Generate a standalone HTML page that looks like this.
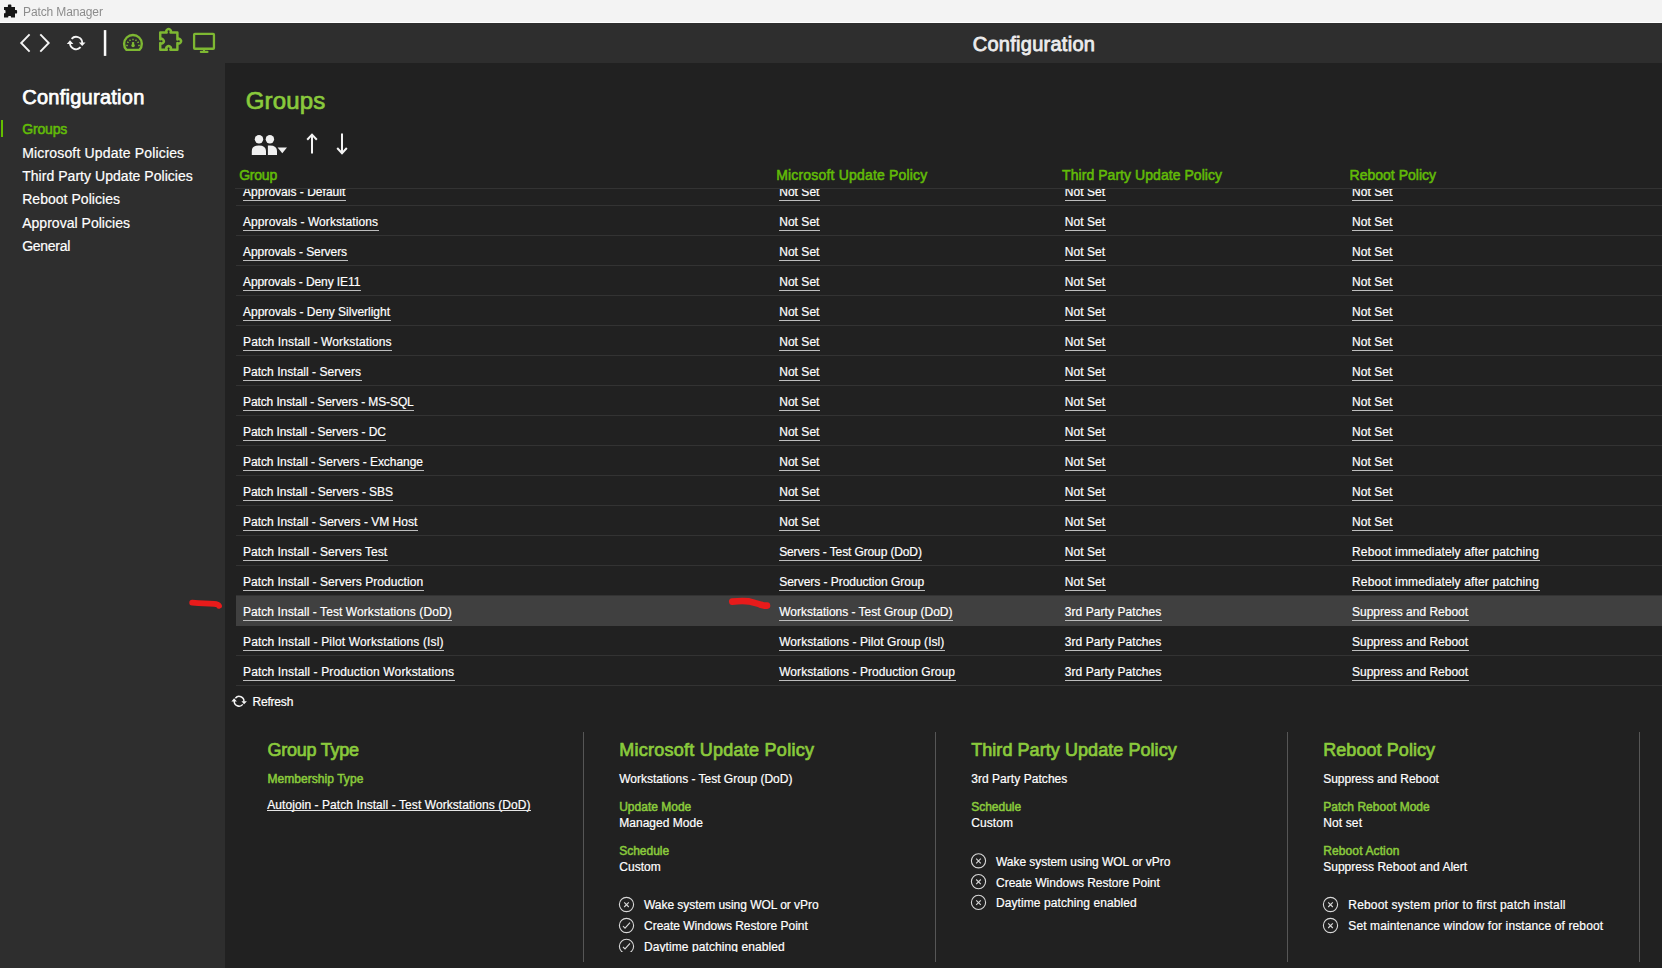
<!DOCTYPE html>
<html lang="en">
<head>
<meta charset="utf-8">
<title>Patch Manager</title>
<style>
html,body{margin:0;padding:0;}
body{width:1662px;height:968px;overflow:hidden;background:#212121;position:relative;font-family:"Liberation Sans",sans-serif;}
.abs{position:absolute;}
#titlebar{left:0;top:0;width:1662px;height:22px;background:#f3f3f3;}
#titleline{left:0;top:22px;width:1662px;height:1px;background:#ffffff;}
#hdr{left:0;top:23px;width:1662px;height:40px;background:#2e2e2e;}
#side{left:0;top:63px;width:225px;height:905px;background:#2e2e2e;}
#main{left:225px;top:63px;width:1437px;height:905px;background:#212121;}
.t{position:absolute;white-space:pre;line-height:1;display:block;}
.ul::after{content:"";position:absolute;left:0;right:-0.6px;top:14px;height:1px;background:#bdbdbd;}
.ul2::after{content:"";position:absolute;left:0;right:0;top:11px;height:1px;background:#e6e6e6;}
.clip{position:absolute;left:0;overflow:hidden;width:1662px;}
.clip>.in{position:absolute;left:0;width:1662px;}
.sep{position:absolute;left:236px;width:1426px;height:1px;background:#333333;}
.vd{position:absolute;top:732px;width:1px;height:230px;background:#565656;}
svg{position:absolute;overflow:visible;}
</style>
</head>
<body>
<div id="titlebar" class="abs"></div>
<div id="titleline" class="abs"></div>
<div id="hdr" class="abs"></div>
<div id="side" class="abs"></div>
<div id="main" class="abs"></div>
<div class="abs" style="left:1px;top:120px;width:2px;height:17px;background:#64be00"></div>

<!-- table -->
<div class="abs" style="left:235px;top:188px;width:1427px;height:1px;background:#333"></div>
<div class="clip" style="top:189px;height:497px;"><div class="in" style="top:-189px;height:968px;">
<div class="abs" style="left:236px;top:596px;width:1426px;height:29.5px;background:#404040"></div>
<div class="sep" style="top:205px"></div>
<div class="sep" style="top:235px"></div>
<div class="sep" style="top:265px"></div>
<div class="sep" style="top:295px"></div>
<div class="sep" style="top:325px"></div>
<div class="sep" style="top:355px"></div>
<div class="sep" style="top:385px"></div>
<div class="sep" style="top:415px"></div>
<div class="sep" style="top:445px"></div>
<div class="sep" style="top:475px"></div>
<div class="sep" style="top:505px"></div>
<div class="sep" style="top:535px"></div>
<div class="sep" style="top:565px"></div>
<div class="sep" style="top:595px"></div>
<div class="sep" style="top:655px"></div>
<div class="sep" style="top:685px"></div>

<span class="t ul" style="left:243.0px;top:186px;font-size:12px;color:#ffffff;letter-spacing:0.013px;-webkit-text-stroke:0.2px #ffffff;">Approvals - Default</span>
<span class="t ul" style="left:779.2px;top:186px;font-size:12px;color:#ffffff;letter-spacing:0.038px;-webkit-text-stroke:0.2px #ffffff;">Not Set</span>
<span class="t ul" style="left:1064.8px;top:186px;font-size:12px;color:#ffffff;letter-spacing:0.038px;-webkit-text-stroke:0.2px #ffffff;">Not Set</span>
<span class="t ul" style="left:1352.0px;top:186px;font-size:12px;color:#ffffff;letter-spacing:0.038px;-webkit-text-stroke:0.2px #ffffff;">Not Set</span>
<span class="t ul" style="left:243.0px;top:216px;font-size:12px;color:#ffffff;letter-spacing:0.076px;-webkit-text-stroke:0.2px #ffffff;">Approvals - Workstations</span>
<span class="t ul" style="left:779.2px;top:216px;font-size:12px;color:#ffffff;letter-spacing:0.038px;-webkit-text-stroke:0.2px #ffffff;">Not Set</span>
<span class="t ul" style="left:1064.8px;top:216px;font-size:12px;color:#ffffff;letter-spacing:0.038px;-webkit-text-stroke:0.2px #ffffff;">Not Set</span>
<span class="t ul" style="left:1352.0px;top:216px;font-size:12px;color:#ffffff;letter-spacing:0.038px;-webkit-text-stroke:0.2px #ffffff;">Not Set</span>
<span class="t ul" style="left:243.0px;top:246px;font-size:12px;color:#ffffff;letter-spacing:-0.072px;-webkit-text-stroke:0.2px #ffffff;">Approvals - Servers</span>
<span class="t ul" style="left:779.2px;top:246px;font-size:12px;color:#ffffff;letter-spacing:0.038px;-webkit-text-stroke:0.2px #ffffff;">Not Set</span>
<span class="t ul" style="left:1064.8px;top:246px;font-size:12px;color:#ffffff;letter-spacing:0.038px;-webkit-text-stroke:0.2px #ffffff;">Not Set</span>
<span class="t ul" style="left:1352.0px;top:246px;font-size:12px;color:#ffffff;letter-spacing:0.038px;-webkit-text-stroke:0.2px #ffffff;">Not Set</span>
<span class="t ul" style="left:243.0px;top:276px;font-size:12px;color:#ffffff;letter-spacing:-0.089px;-webkit-text-stroke:0.2px #ffffff;">Approvals - Deny IE11</span>
<span class="t ul" style="left:779.2px;top:276px;font-size:12px;color:#ffffff;letter-spacing:0.038px;-webkit-text-stroke:0.2px #ffffff;">Not Set</span>
<span class="t ul" style="left:1064.8px;top:276px;font-size:12px;color:#ffffff;letter-spacing:0.038px;-webkit-text-stroke:0.2px #ffffff;">Not Set</span>
<span class="t ul" style="left:1352.0px;top:276px;font-size:12px;color:#ffffff;letter-spacing:0.038px;-webkit-text-stroke:0.2px #ffffff;">Not Set</span>
<span class="t ul" style="left:243.0px;top:306px;font-size:12px;color:#ffffff;letter-spacing:-0.015px;-webkit-text-stroke:0.2px #ffffff;">Approvals - Deny Silverlight</span>
<span class="t ul" style="left:779.2px;top:306px;font-size:12px;color:#ffffff;letter-spacing:0.038px;-webkit-text-stroke:0.2px #ffffff;">Not Set</span>
<span class="t ul" style="left:1064.8px;top:306px;font-size:12px;color:#ffffff;letter-spacing:0.038px;-webkit-text-stroke:0.2px #ffffff;">Not Set</span>
<span class="t ul" style="left:1352.0px;top:306px;font-size:12px;color:#ffffff;letter-spacing:0.038px;-webkit-text-stroke:0.2px #ffffff;">Not Set</span>
<span class="t ul" style="left:243.0px;top:336px;font-size:12px;color:#ffffff;letter-spacing:0.126px;-webkit-text-stroke:0.2px #ffffff;">Patch Install - Workstations</span>
<span class="t ul" style="left:779.2px;top:336px;font-size:12px;color:#ffffff;letter-spacing:0.038px;-webkit-text-stroke:0.2px #ffffff;">Not Set</span>
<span class="t ul" style="left:1064.8px;top:336px;font-size:12px;color:#ffffff;letter-spacing:0.038px;-webkit-text-stroke:0.2px #ffffff;">Not Set</span>
<span class="t ul" style="left:1352.0px;top:336px;font-size:12px;color:#ffffff;letter-spacing:0.038px;-webkit-text-stroke:0.2px #ffffff;">Not Set</span>
<span class="t ul" style="left:243.0px;top:366px;font-size:12px;color:#ffffff;letter-spacing:0.027px;-webkit-text-stroke:0.2px #ffffff;">Patch Install - Servers</span>
<span class="t ul" style="left:779.2px;top:366px;font-size:12px;color:#ffffff;letter-spacing:0.038px;-webkit-text-stroke:0.2px #ffffff;">Not Set</span>
<span class="t ul" style="left:1064.8px;top:366px;font-size:12px;color:#ffffff;letter-spacing:0.038px;-webkit-text-stroke:0.2px #ffffff;">Not Set</span>
<span class="t ul" style="left:1352.0px;top:366px;font-size:12px;color:#ffffff;letter-spacing:0.038px;-webkit-text-stroke:0.2px #ffffff;">Not Set</span>
<span class="t ul" style="left:243.0px;top:396px;font-size:12px;color:#ffffff;letter-spacing:-0.105px;-webkit-text-stroke:0.2px #ffffff;">Patch Install - Servers - MS-SQL</span>
<span class="t ul" style="left:779.2px;top:396px;font-size:12px;color:#ffffff;letter-spacing:0.038px;-webkit-text-stroke:0.2px #ffffff;">Not Set</span>
<span class="t ul" style="left:1064.8px;top:396px;font-size:12px;color:#ffffff;letter-spacing:0.038px;-webkit-text-stroke:0.2px #ffffff;">Not Set</span>
<span class="t ul" style="left:1352.0px;top:396px;font-size:12px;color:#ffffff;letter-spacing:0.038px;-webkit-text-stroke:0.2px #ffffff;">Not Set</span>
<span class="t ul" style="left:243.0px;top:426px;font-size:12px;color:#ffffff;letter-spacing:-0.092px;-webkit-text-stroke:0.2px #ffffff;">Patch Install - Servers - DC</span>
<span class="t ul" style="left:779.2px;top:426px;font-size:12px;color:#ffffff;letter-spacing:0.038px;-webkit-text-stroke:0.2px #ffffff;">Not Set</span>
<span class="t ul" style="left:1064.8px;top:426px;font-size:12px;color:#ffffff;letter-spacing:0.038px;-webkit-text-stroke:0.2px #ffffff;">Not Set</span>
<span class="t ul" style="left:1352.0px;top:426px;font-size:12px;color:#ffffff;letter-spacing:0.038px;-webkit-text-stroke:0.2px #ffffff;">Not Set</span>
<span class="t ul" style="left:243.0px;top:456px;font-size:12px;color:#ffffff;letter-spacing:-0.042px;-webkit-text-stroke:0.2px #ffffff;">Patch Install - Servers - Exchange</span>
<span class="t ul" style="left:779.2px;top:456px;font-size:12px;color:#ffffff;letter-spacing:0.038px;-webkit-text-stroke:0.2px #ffffff;">Not Set</span>
<span class="t ul" style="left:1064.8px;top:456px;font-size:12px;color:#ffffff;letter-spacing:0.038px;-webkit-text-stroke:0.2px #ffffff;">Not Set</span>
<span class="t ul" style="left:1352.0px;top:456px;font-size:12px;color:#ffffff;letter-spacing:0.038px;-webkit-text-stroke:0.2px #ffffff;">Not Set</span>
<span class="t ul" style="left:243.0px;top:486px;font-size:12px;color:#ffffff;letter-spacing:-0.075px;-webkit-text-stroke:0.2px #ffffff;">Patch Install - Servers - SBS</span>
<span class="t ul" style="left:779.2px;top:486px;font-size:12px;color:#ffffff;letter-spacing:0.038px;-webkit-text-stroke:0.2px #ffffff;">Not Set</span>
<span class="t ul" style="left:1064.8px;top:486px;font-size:12px;color:#ffffff;letter-spacing:0.038px;-webkit-text-stroke:0.2px #ffffff;">Not Set</span>
<span class="t ul" style="left:1352.0px;top:486px;font-size:12px;color:#ffffff;letter-spacing:0.038px;-webkit-text-stroke:0.2px #ffffff;">Not Set</span>
<span class="t ul" style="left:243.0px;top:516px;font-size:12px;color:#ffffff;letter-spacing:0.008px;-webkit-text-stroke:0.2px #ffffff;">Patch Install - Servers - VM Host</span>
<span class="t ul" style="left:779.2px;top:516px;font-size:12px;color:#ffffff;letter-spacing:0.038px;-webkit-text-stroke:0.2px #ffffff;">Not Set</span>
<span class="t ul" style="left:1064.8px;top:516px;font-size:12px;color:#ffffff;letter-spacing:0.038px;-webkit-text-stroke:0.2px #ffffff;">Not Set</span>
<span class="t ul" style="left:1352.0px;top:516px;font-size:12px;color:#ffffff;letter-spacing:0.038px;-webkit-text-stroke:0.2px #ffffff;">Not Set</span>
<span class="t ul" style="left:243.0px;top:546px;font-size:12px;color:#ffffff;letter-spacing:0.061px;-webkit-text-stroke:0.2px #ffffff;">Patch Install - Servers Test</span>
<span class="t ul" style="left:779.2px;top:546px;font-size:12px;color:#ffffff;letter-spacing:-0.124px;-webkit-text-stroke:0.2px #ffffff;">Servers - Test Group (DoD)</span>
<span class="t ul" style="left:1064.8px;top:546px;font-size:12px;color:#ffffff;letter-spacing:0.038px;-webkit-text-stroke:0.2px #ffffff;">Not Set</span>
<span class="t ul" style="left:1352.0px;top:546px;font-size:12px;color:#ffffff;letter-spacing:0.148px;-webkit-text-stroke:0.2px #ffffff;">Reboot immediately after patching</span>
<span class="t ul" style="left:243.0px;top:576px;font-size:12px;color:#ffffff;letter-spacing:0.062px;-webkit-text-stroke:0.2px #ffffff;">Patch Install - Servers Production</span>
<span class="t ul" style="left:779.2px;top:576px;font-size:12px;color:#ffffff;letter-spacing:-0.041px;-webkit-text-stroke:0.2px #ffffff;">Servers - Production Group</span>
<span class="t ul" style="left:1064.8px;top:576px;font-size:12px;color:#ffffff;letter-spacing:0.038px;-webkit-text-stroke:0.2px #ffffff;">Not Set</span>
<span class="t ul" style="left:1352.0px;top:576px;font-size:12px;color:#ffffff;letter-spacing:0.148px;-webkit-text-stroke:0.2px #ffffff;">Reboot immediately after patching</span>
<span class="t ul" style="left:243.0px;top:606px;font-size:12px;color:#ffffff;letter-spacing:0.079px;-webkit-text-stroke:0.2px #ffffff;">Patch Install - Test Workstations (DoD)</span>
<span class="t ul" style="left:779.2px;top:606px;font-size:12px;color:#ffffff;letter-spacing:-0.010px;-webkit-text-stroke:0.2px #ffffff;">Workstations - Test Group (DoD)</span>
<span class="t ul" style="left:1064.8px;top:606px;font-size:12px;color:#ffffff;letter-spacing:0.065px;-webkit-text-stroke:0.2px #ffffff;">3rd Party Patches</span>
<span class="t ul" style="left:1352.0px;top:606px;font-size:12px;color:#ffffff;-webkit-text-stroke:0.2px #ffffff;">Suppress and Reboot</span>
<span class="t ul" style="left:243.0px;top:636px;font-size:12px;color:#ffffff;letter-spacing:0.136px;-webkit-text-stroke:0.2px #ffffff;">Patch Install - Pilot Workstations (Isl)</span>
<span class="t ul" style="left:779.2px;top:636px;font-size:12px;color:#ffffff;letter-spacing:0.064px;-webkit-text-stroke:0.2px #ffffff;">Workstations - Pilot Group (Isl)</span>
<span class="t ul" style="left:1064.8px;top:636px;font-size:12px;color:#ffffff;letter-spacing:0.065px;-webkit-text-stroke:0.2px #ffffff;">3rd Party Patches</span>
<span class="t ul" style="left:1352.0px;top:636px;font-size:12px;color:#ffffff;-webkit-text-stroke:0.2px #ffffff;">Suppress and Reboot</span>
<span class="t ul" style="left:243.0px;top:666px;font-size:12px;color:#ffffff;letter-spacing:0.134px;-webkit-text-stroke:0.2px #ffffff;">Patch Install - Production Workstations</span>
<span class="t ul" style="left:779.2px;top:666px;font-size:12px;color:#ffffff;letter-spacing:0.063px;-webkit-text-stroke:0.2px #ffffff;">Workstations - Production Group</span>
<span class="t ul" style="left:1064.8px;top:666px;font-size:12px;color:#ffffff;letter-spacing:0.065px;-webkit-text-stroke:0.2px #ffffff;">3rd Party Patches</span>
<span class="t ul" style="left:1352.0px;top:666px;font-size:12px;color:#ffffff;-webkit-text-stroke:0.2px #ffffff;">Suppress and Reboot</span>
</div></div>

<!-- bottom panels -->
<div class="vd" style="left:583px"></div>
<div class="vd" style="left:935px"></div>
<div class="vd" style="left:1287px"></div>
<div class="vd" style="left:1639px"></div>
<div class="clip" style="top:725px;height:227px;"><div class="in" style="top:-725px;height:968px;">
<span class="t" style="left:267.4px;top:741px;font-size:18px;color:#8aca3c;letter-spacing:-0.223px;-webkit-text-stroke:0.7px #8aca3c;">Group Type</span>
<span class="t" style="left:619.2px;top:741px;font-size:18px;color:#8aca3c;letter-spacing:0.257px;-webkit-text-stroke:0.7px #8aca3c;">Microsoft Update Policy</span>
<span class="t" style="left:971.2px;top:741px;font-size:18px;color:#8aca3c;letter-spacing:0.060px;-webkit-text-stroke:0.7px #8aca3c;">Third Party Update Policy</span>
<span class="t" style="left:1323.2px;top:741px;font-size:18px;color:#8aca3c;letter-spacing:0.072px;-webkit-text-stroke:0.7px #8aca3c;">Reboot Policy</span>
<span class="t" style="left:267.4px;top:773px;font-size:12px;color:#8aca3c;letter-spacing:0.056px;-webkit-text-stroke:0.5px #8aca3c;">Membership Type</span>
<span class="t ul2" style="left:267.2px;top:799px;font-size:12px;color:#ffffff;letter-spacing:0.073px;-webkit-text-stroke:0.2px #ffffff;">Autojoin - Patch Install - Test Workstations (DoD)</span>
<span class="t" style="left:619.2px;top:773px;font-size:12px;color:#ffffff;letter-spacing:-0.013px;-webkit-text-stroke:0.2px #ffffff;">Workstations - Test Group (DoD)</span>
<span class="t" style="left:619.2px;top:801px;font-size:12px;color:#8aca3c;-webkit-text-stroke:0.5px #8aca3c;">Update Mode</span>
<span class="t" style="left:619.2px;top:817px;font-size:12px;color:#ffffff;letter-spacing:0.034px;-webkit-text-stroke:0.2px #ffffff;">Managed Mode</span>
<span class="t" style="left:619.2px;top:845px;font-size:12px;color:#8aca3c;letter-spacing:-0.006px;-webkit-text-stroke:0.5px #8aca3c;">Schedule</span>
<span class="t" style="left:619.2px;top:861px;font-size:12px;color:#ffffff;letter-spacing:0.059px;-webkit-text-stroke:0.2px #ffffff;">Custom</span>
<span class="t" style="left:644.0px;top:899px;font-size:12px;color:#ffffff;letter-spacing:-0.042px;-webkit-text-stroke:0.2px #ffffff;">Wake system using WOL or vPro</span>
<span class="t" style="left:644.0px;top:920px;font-size:12px;color:#ffffff;letter-spacing:-0.010px;-webkit-text-stroke:0.2px #ffffff;">Create Windows Restore Point</span>
<span class="t" style="left:644.0px;top:941px;font-size:12px;color:#ffffff;letter-spacing:0.081px;-webkit-text-stroke:0.2px #ffffff;">Daytime patching enabled</span>
<span class="t" style="left:971.2px;top:773px;font-size:12px;color:#ffffff;letter-spacing:0.048px;-webkit-text-stroke:0.2px #ffffff;">3rd Party Patches</span>
<span class="t" style="left:971.2px;top:801px;font-size:12px;color:#8aca3c;letter-spacing:-0.006px;-webkit-text-stroke:0.5px #8aca3c;">Schedule</span>
<span class="t" style="left:971.2px;top:817px;font-size:12px;color:#ffffff;letter-spacing:0.093px;-webkit-text-stroke:0.2px #ffffff;">Custom</span>
<span class="t" style="left:996.0px;top:856px;font-size:12px;color:#ffffff;letter-spacing:-0.053px;-webkit-text-stroke:0.2px #ffffff;">Wake system using WOL or vPro</span>
<span class="t" style="left:996.0px;top:877px;font-size:12px;color:#ffffff;letter-spacing:-0.010px;-webkit-text-stroke:0.2px #ffffff;">Create Windows Restore Point</span>
<span class="t" style="left:996.0px;top:897px;font-size:12px;color:#ffffff;letter-spacing:0.081px;-webkit-text-stroke:0.2px #ffffff;">Daytime patching enabled</span>
<span class="t" style="left:1323.2px;top:773px;font-size:12px;color:#ffffff;letter-spacing:-0.021px;-webkit-text-stroke:0.2px #ffffff;">Suppress and Reboot</span>
<span class="t" style="left:1323.2px;top:801px;font-size:12px;color:#8aca3c;letter-spacing:0.031px;-webkit-text-stroke:0.5px #8aca3c;">Patch Reboot Mode</span>
<span class="t" style="left:1323.2px;top:817px;font-size:12px;color:#ffffff;letter-spacing:0.126px;-webkit-text-stroke:0.2px #ffffff;">Not set</span>
<span class="t" style="left:1323.2px;top:845px;font-size:12px;color:#8aca3c;letter-spacing:0.122px;-webkit-text-stroke:0.5px #8aca3c;">Reboot Action</span>
<span class="t" style="left:1323.2px;top:861px;font-size:12px;color:#ffffff;letter-spacing:0.022px;-webkit-text-stroke:0.2px #ffffff;">Suppress Reboot and Alert</span>
<span class="t" style="left:1348.3px;top:899px;font-size:12px;color:#ffffff;letter-spacing:0.172px;-webkit-text-stroke:0.2px #ffffff;">Reboot system prior to first patch install</span>
<span class="t" style="left:1348.3px;top:920px;font-size:12px;color:#ffffff;letter-spacing:0.120px;-webkit-text-stroke:0.2px #ffffff;">Set maintenance window for instance of reboot</span>
<svg width="1662" height="968" viewBox="0 0 1662 968" style="left:0;top:0">
<g fill="none" stroke="#d8d8d8" stroke-width="1.1">
<circle cx="626.5" cy="904.5" r="7.1"/><path d="M624.2 902.4 L628.8 907.0 M628.8 902.4 L624.2 907.0"/>
<circle cx="626.5" cy="925.5" r="7.1"/><path d="M623.0 926.2 L625.0 928.1 L630.0 922.6"/>
<circle cx="626.5" cy="946.3" r="7.1"/><path d="M623.0 947.0 L625.0 948.9 L630.0 943.4"/>
<circle cx="978.5" cy="860.8" r="7.1"/><path d="M976.2 858.7 L980.8 863.3 M980.8 858.7 L976.2 863.3"/>
<circle cx="978.5" cy="881.6" r="7.1"/><path d="M976.2 879.5 L980.8 884.1 M980.8 879.5 L976.2 884.1"/>
<circle cx="978.5" cy="902.4" r="7.1"/><path d="M976.2 900.3 L980.8 904.9 M980.8 900.3 L976.2 904.9"/>
<circle cx="1330.5" cy="904.5" r="7.1"/><path d="M1328.2 902.4 L1332.8 907.0 M1332.8 902.4 L1328.2 907.0"/>
<circle cx="1330.5" cy="925.5" r="7.1"/><path d="M1328.2 923.4 L1332.8 928.0 M1332.8 923.4 L1328.2 928.0"/>
</g></svg>

</div></div>

<span class="t" style="left:22.6px;top:6px;font-size:12px;color:#8c8c8c;letter-spacing:-0.122px;will-change:transform;">Patch Manager</span>
<span class="t" style="left:972.7px;top:34px;font-size:20px;color:#ececec;letter-spacing:0.272px;-webkit-text-stroke:0.8px #ececec;">Configuration</span>
<span class="t" style="left:22.2px;top:87px;font-size:20px;color:#ffffff;letter-spacing:0.264px;-webkit-text-stroke:0.75px #ffffff;">Configuration</span>
<span class="t" style="left:22.2px;top:122px;font-size:14px;color:#62bb08;letter-spacing:-0.154px;-webkit-text-stroke:0.55px #62bb08;">Groups</span>
<span class="t" style="left:22.2px;top:146px;font-size:14px;color:#ffffff;letter-spacing:0.166px;-webkit-text-stroke:0.2px #ffffff;">Microsoft Update Policies</span>
<span class="t" style="left:22.2px;top:169px;font-size:14px;color:#ffffff;letter-spacing:0.039px;-webkit-text-stroke:0.2px #ffffff;">Third Party Update Policies</span>
<span class="t" style="left:22.2px;top:192px;font-size:14px;color:#ffffff;letter-spacing:0.035px;-webkit-text-stroke:0.2px #ffffff;">Reboot Policies</span>
<span class="t" style="left:22.2px;top:216px;font-size:14px;color:#ffffff;letter-spacing:0.024px;-webkit-text-stroke:0.2px #ffffff;">Approval Policies</span>
<span class="t" style="left:22.2px;top:239px;font-size:14px;color:#ffffff;letter-spacing:-0.288px;-webkit-text-stroke:0.2px #ffffff;">General</span>
<span class="t" style="left:245.8px;top:89px;font-size:24px;color:#8aca3c;letter-spacing:0.133px;-webkit-text-stroke:0.7px #8aca3c;">Groups</span>
<span class="t" style="left:239.2px;top:168px;font-size:14px;color:#62bb08;letter-spacing:-0.224px;-webkit-text-stroke:0.55px #62bb08;">Group</span>
<span class="t" style="left:776.2px;top:168px;font-size:14px;color:#62bb08;letter-spacing:0.184px;-webkit-text-stroke:0.55px #62bb08;">Microsoft Update Policy</span>
<span class="t" style="left:1062.1px;top:168px;font-size:14px;color:#62bb08;letter-spacing:0.051px;-webkit-text-stroke:0.55px #62bb08;">Third Party Update Policy</span>
<span class="t" style="left:1349.5px;top:168px;font-size:14px;color:#62bb08;letter-spacing:0.016px;-webkit-text-stroke:0.55px #62bb08;">Reboot Policy</span>
<span class="t" style="left:252.4px;top:696px;font-size:12px;color:#ffffff;letter-spacing:-0.176px;-webkit-text-stroke:0.2px #ffffff;">Refresh</span>
<svg width="1662" height="968" viewBox="0 0 1662 968" style="left:0;top:0;pointer-events:none">
<!-- title bar puzzle -->
<path fill="#161616" d="M4 6.9 H7.9 V5.4 Q7.9 4.5 8.8 4.5 H10.5 Q11.4 4.5 11.4 5.4 V6.9 H15 V10.1 H16.2 Q17.1 10.1 17.1 11 V12.7 Q17.1 13.6 16.2 13.6 H15 V17.5 H11 V16.7 Q11 16 10.3 16 H8.9 Q8.2 16 8.2 16.7 V17.4 H4 V13.3 H4.6 Q5.5 13.3 5.5 12.4 V10.8 Q5.5 9.9 4.6 9.9 H4 Z"/>
<!-- nav chevrons -->
<g fill="none" stroke="#f4f4f4" stroke-width="1.9" stroke-linejoin="miter">
<polyline points="29.6,34.4 21.2,43 29.6,51.6"/>
<polyline points="40.3,34.4 48.7,43 40.3,51.6"/>
</g>
<!-- refresh -->
<g fill="none" stroke="#f4f4f4" stroke-width="1.85">
<path d="M71.6 38.9 A6.05 6.05 0 0 1 82.2 43.1"/>
<path d="M80.6 47.2 A6.05 6.05 0 0 1 70 43.1"/>
</g>
<path fill="#f4f4f4" d="M78.9 42.4 H85.5 L82.2 46 Z M66.8 43.9 H73.4 L70 40.3 Z"/>
<!-- separator bar -->
<rect x="103.8" y="30.1" width="2.5" height="25.8" fill="#fafafa"/>
<!-- gauge -->
<path fill="none" stroke="#7eb832" stroke-width="2.4" stroke-linejoin="round" d="M126.5 49.9 A8.85 8.85 0 1 1 139.4 49.9 Z"/>
<path fill="none" stroke="#7eb832" stroke-width="1.3" d="M127.80 45.50 L126.20 45.50 M128.59 42.74 L127.23 41.90 M130.40 41.00 L129.60 39.61 M133.00 40.30 L133.00 38.70 M135.60 41.00 L136.40 39.61 M137.41 42.74 L138.77 41.90 M138.20 45.50 L139.80 45.50"/>
<g fill="#7eb832"><rect x="131.95" y="41.9" width="2.2" height="5.2" rx="0.6"/><circle cx="133.05" cy="45.5" r="1.7"/></g>
<!-- puzzle outline -->
<path fill="none" stroke="#7eb832" stroke-width="2.45" stroke-linejoin="round" d="M160.25 32.55 H166.7 A2.25 2.25 0 1 1 170.5 32.55 H177.4 V39.4 A2.25 2.25 0 1 1 177.4 43 V49.8 H170.36 A2.25 2.25 0 1 0 166.84 49.8 H160.25 V43.04 A2.25 2.25 0 1 0 160.25 39.36 Z"/>
<!-- monitor -->
<g fill="none" stroke="#7eb832">
<rect x="194.1" y="33.85" width="19.85" height="14.9" rx="0.8" stroke-width="2.3"/>
<path d="M204 49.8 V51.5" stroke-width="2.1"/>
<path d="M200.9 51.95 H207.4" stroke-width="2.3" stroke-linecap="round"/>
</g>
<!-- people -->
<g fill="#f0f0f0">
<circle cx="259" cy="139.3" r="4.2"/>
<circle cx="269.9" cy="139.3" r="4.2"/>
<path d="M251.8 155.1 V151 Q251.8 145.4 258.9 145.4 Q266 145.4 266 151 V155.1 Z"/>
<path d="M267.9 145.6 Q268.8 145.4 269.9 145.4 Q277 145.4 277 151 V155.1 H267.9 Z"/>
<path d="M277.6 147.4 H287 L282.3 153.3 Z"/>
</g>
<!-- arrows -->
<g fill="none" stroke="#f4f4f4" stroke-width="2">
<path d="M312 153.6 V135 M307.2 139.8 L312 134.6 L316.8 139.8"/>
<path d="M342 133.6 V152.4 M337.2 148 L342 153.2 L346.8 148"/>
</g>
<!-- small refresh -->
<g fill="none" stroke="#f4f4f4" stroke-width="1.5">
<path d="M235.4 698.2 A4.8 4.8 0 0 1 243.9 701.7"/>
<path d="M242.8 704.4 A4.8 4.8 0 0 1 234.3 700.9"/>
</g>
<path fill="#f4f4f4" d="M241.4 701.2 H246.9 L244.1 704.3 Z M231.4 701.4 H236.9 L234.1 698.3 Z"/>
<!-- red marks -->
<g fill="none" stroke="#e81b1b" stroke-linecap="round" stroke-linejoin="round">
<path d="M192.2 602.6 Q205 603.4 214 603.8 Q218 604 219 605.8" stroke-width="5.8"/>
<path d="M732.3 601.6 Q742 600.6 749 601.4 Q757 603.4 761 604.8 Q765 605.8 767 605.6" stroke-width="6.6"/>
</g>
</svg>

</body>
</html>
